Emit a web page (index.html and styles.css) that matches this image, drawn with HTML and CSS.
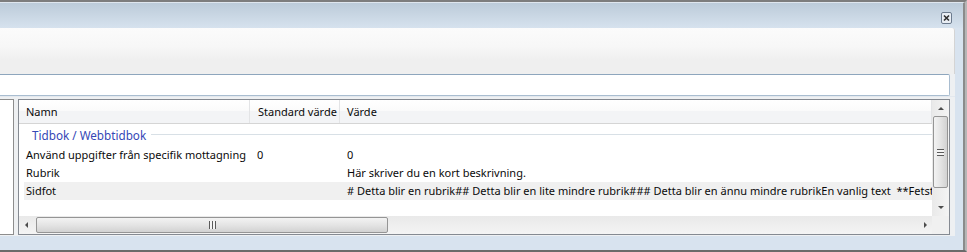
FILE: index.html
```html
<!DOCTYPE html>
<html lang="sv">
<head>
    <meta charset="utf-8" />
    <title>Inställningar</title>
    <link rel="stylesheet" href="styles.css">
</head>
<body>
    <div class="window">
        <div class="frame">
            <div class="titlebar">
                <span class="close-btn">
                    <svg viewBox="0 0 11 12" width="11" height="12">
                        <rect x="0.5" y="0.5" width="10" height="11" rx="1.5" fill="#e9eef4" stroke="#6c7b8e"/>
                        <path d="M3 3.5 L8 8.5 M8 3.5 L3 8.5" stroke="#2f2f2f" stroke-width="1.6"/>
                    </svg>
                </span>
            </div>

            <div class="panel">
                <div class="toolbar"></div>
                <div class="search"></div>

                <div class="content">
                    <div class="side"></div>

                    <div class="grid">
                        <div class="grid-main">
                            <div class="grid-view">
                                <div class="grid-head">
                                    <div class="hcell">Namn</div>
                                    <div class="hcell hcell-std">Standard värde</div>
                                    <div class="hcell">Värde</div>
                                </div>

                                <div class="group">
                                    <span>Tidbok / Webbtidbok</span>
                                    <span class="group-line"></span>
                                </div>

                                <div class="row">
                                    <div class="cell cell-name">Använd uppgifter från specifik mottagning</div>
                                    <div class="cell">0</div>
                                    <div class="cell">0</div>
                                </div>
                                <div class="row">
                                    <div class="cell cell-name">Rubrik</div>
                                    <div class="cell"></div>
                                    <div class="cell">Här skriver du en kort beskrivning.</div>
                                </div>
                                <div class="row row-selected">
                                    <div class="cell cell-name">Sidfot</div>
                                    <div class="cell"></div>
                                    <div class="cell"># Detta blir en rubrik## Detta blir en lite mindre rubrik### Detta blir en ännu mindre rubrikEn vanlig text  **Fetstil text**</div>
                                </div>
                            </div>

                            <div class="vscroll">
                                <span class="arrow arrow-up"></span>
                                <div class="vthumb">
                                    <span class="grip-h"></span>
                                </div>
                                <span class="arrow arrow-down"></span>
                            </div>
                        </div>

                        <div class="hscroll-row">
                            <div class="hscroll">
                                <span class="arrow arrow-left"></span>
                                <div class="hthumb">
                                    <span class="grip-v"></span>
                                </div>
                                <span class="arrow arrow-right"></span>
                            </div>
                            <div class="corner"></div>
                        </div>
                    </div>
                </div>
            </div>
        </div>
    </div>
</body>
</html>
```

FILE: styles.css
```css
* {
    margin: 0;
    padding: 0;
    box-sizing: border-box;
}

body {
    font-family: "Noto Sans", "Open Sans", sans-serif;
    font-size: 11px;
    color: #0a0a0a;
    background: #6f6f6f;
    overflow: hidden;
}

.window {
    width: 967px;
    height: 252px;
    border-top: 2px solid #7d7d7d;
    border-bottom: 2px solid #6a6a6a;
    border-right: 2px solid #b6b6b6;
    background: #d8e3ef;
}

.frame {
    height: 100%;
    border-right: 2px solid #8b8b8b;
    border-top: 1px solid #dfe6ee;
    display: flex;
    flex-direction: column;
}

/* title strip with the close box */
.titlebar {
    height: 25px;
    flex-shrink: 0;
    background: linear-gradient(#bccbd9, #d6e2ee);
    display: flex;
    justify-content: flex-end;
    align-items: flex-start;
    padding: 9px 11px 0 0;
}

.close-btn {
    display: block;
    width: 11px;
    height: 12px;
}

.close-btn svg {
    display: block;
}

/* main panel */
.panel {
    width: 955px;
    height: 208px;
    flex-shrink: 0;
    background: #eef0f2;
    border-top-right-radius: 3px;
    display: flex;
    flex-direction: column;
}

.toolbar {
    height: 46px;
    flex-shrink: 0;
    background: linear-gradient(#fbfbfb 0%, #f7f7f7 40%, #efefef 70%, #efefef 100%);
    border-top-right-radius: 3px;
    border-right: 1px solid #d4d4d4;
}

.search {
    height: 22px;
    width: 954px;
    margin-left: -4px;
    flex-shrink: 0;
    background: #fff;
    border: 1px solid #a9bdd0;
    border-top-color: #8ea6bd;
    border-radius: 0 2px 2px 0;
}

.content {
    flex: 1;
    min-height: 0;
    display: flex;
    gap: 4px;
    padding: 2px 5px 1px 0;
    border-top: 1px solid #e3e8ee;
}

.side {
    width: 14px;
    background: #fff;
    border: 1px solid #8d8d8d;
    border-left: none;
}

/* property grid */
.grid {
    width: 932px;
    border: 1px solid #858a92;
    background: #fff;
    display: flex;
    flex-direction: column;
}

.grid-main {
    flex: 1;
    display: flex;
    min-height: 0;
}

.grid-view {
    flex: 1;
    min-width: 0;
    overflow: hidden;
}

.grid-head {
    display: grid;
    grid-template-columns: 231px 90px 1fr;
    height: 24px;
    background: linear-gradient(#ffffff 0%, #fbfbfb 45%, #f3f4f6 50%, #f3f4f6 100%);
    border-bottom: 1px solid #d5d5d5;
    line-height: 23px;
}

.hcell {
    padding-left: 7px;
    border-right: 1px solid #e3e4e6;
    white-space: nowrap;
}

.hcell-std {
    padding-left: 8px;
}

.group {
    display: flex;
    align-items: center;
    height: 22px;
    padding: 0 0 1px 13px;
    color: #3547b6;
    font-size: 11.7px;
}

.group-line {
    flex: 1;
    height: 1px;
    margin-left: 5px;
    background: #d8e0e6;
}

.row {
    display: grid;
    grid-template-columns: 226px 90px 1fr;
    height: 18px;
    margin-left: 5px;
    line-height: 18px;
}

.row-selected {
    background: #f0f0f0;
}

.cell {
    padding-left: 7px;
    overflow: hidden;
    white-space: pre;
}

.cell-name {
    padding-left: 2px;
}

/* scrollbars */
.vscroll {
    width: 17px;
    background: linear-gradient(90deg, #e9e9e9, #f4f4f4);
    display: flex;
    flex-direction: column;
    align-items: center;
    padding: 1px 0;
}

.hscroll-row {
    display: flex;
    height: 18px;
    flex-shrink: 0;
}

.hscroll {
    flex: 1;
    background: linear-gradient(#e9e9e9, #f4f4f4);
    display: flex;
    align-items: center;
}

.corner {
    width: 17px;
    background: #f0f0f0;
}

.arrow {
    width: 0;
    height: 0;
    border: 3px solid transparent;
}

.arrow-up {
    margin: 6px 0 6px;
    border-bottom: 3px solid #4d4d4d;
    border-top-width: 0;
}

.arrow-down {
    margin-top: auto;
    margin-bottom: 6px;
    border-top: 3px solid #4d4d4d;
    border-bottom-width: 0;
}

.arrow-left {
    margin: 0 8px 0 6px;
    border-right: 3px solid #4d4d4d;
    border-left-width: 0;
}

.arrow-right {
    margin: 0 5px 0 auto;
    border-left: 3px solid #4d4d4d;
    border-right-width: 0;
}

.vthumb {
    width: 15px;
    height: 72px;
    border: 1px solid #959595;
    border-radius: 2px;
    background: linear-gradient(90deg, #f3f3f3, #e4e4e4 50%, #d2d2d2);
    display: flex;
    align-items: center;
    justify-content: center;
}

.hthumb {
    width: 352px;
    height: 16px;
    border: 1px solid #959595;
    border-radius: 2px;
    background: linear-gradient(#f3f3f3, #e4e4e4 50%, #d2d2d2);
    display: flex;
    align-items: center;
    justify-content: center;
}

.grip-h {
    width: 7px;
    height: 7px;
    background: repeating-linear-gradient(#5a5a5a 0 1px, #f4f4f4 1px 3px);
}

.grip-v {
    width: 7px;
    height: 8px;
    background: repeating-linear-gradient(90deg, #5a5a5a 0 1px, #f4f4f4 1px 3px);
}
```
